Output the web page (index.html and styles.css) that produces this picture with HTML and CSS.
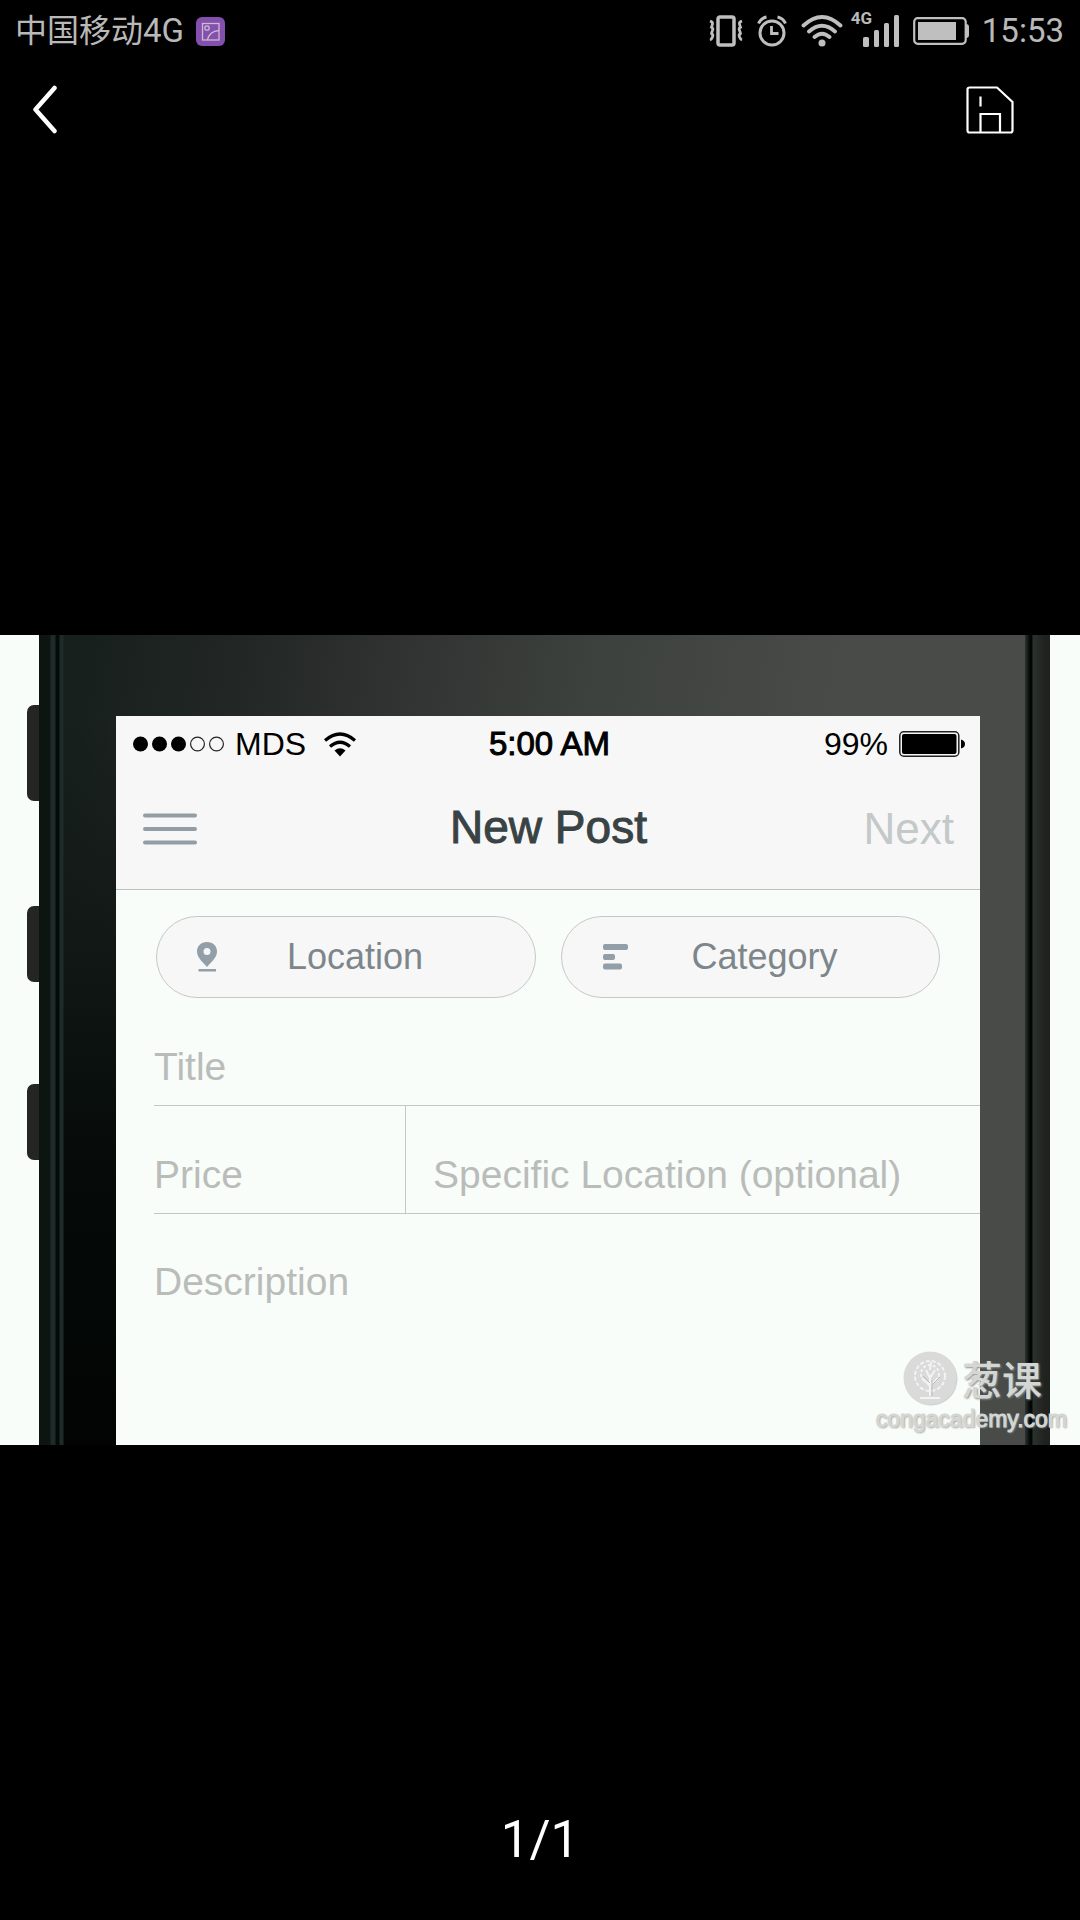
FILE: index.html
```html
<!DOCTYPE html>
<html lang="zh-CN">
<head>
<meta charset="utf-8">
<meta name="viewport" content="width=device-width, initial-scale=1">
<title>1/1</title>
<link rel="stylesheet" href="styles.css">
</head>
<body>
<div class="statusbar">
  <span class="carrier"><span class="carrier-name">中国移动</span>4G</span>
  <svg class="gallery-badge" width="29" height="29" viewBox="0 0 29 29" aria-hidden="true">
    <rect width="29" height="29" rx="6" fill="#8550ad"/>
    <g fill="none" stroke="#c9bcd2" stroke-width="1.3"><rect x="6.5" y="6.5" width="16.5" height="16.5"/><circle cx="11" cy="11" r="2.2"/><path d="M11.5 23c1-5 5-9 11.5-9.5"/></g>
  </svg>
  <div class="indicators">
    <svg width="34" height="32" viewBox="0 0 34 32" fill="none" stroke="#bfbfbf" aria-hidden="true">
      <rect x="9" y="2" width="16" height="28" rx="2" stroke-width="3.5"/>
      <path d="M1 6q3 1 2.500 3t-1 3.200q2 1 1 3.300t-1 3q2 1 1 3.500T1 25M33 6q-3 1-2.500 3t1 3.200q-2 1-1 3.300t1 3q-2 1-1 3.500t2.500 3" stroke-width="2.8"/>
    </svg>
    <svg class="gap-m" width="30" height="32" viewBox="0 0 30 32" fill="none" stroke="#bfbfbf" aria-hidden="true">
      <circle cx="15" cy="18" r="12" stroke-width="3"/><path d="M14.500 11v7.500h7" stroke-width="2.8"/>
      <path d="M1.500 8.500Q4 3 9.500 2M28.500 8.500Q26 3 20.500 2" stroke-width="3"/>
    </svg>
    <svg class="gap-m" width="42" height="32" viewBox="0 0 42 32" fill="none" stroke="#bfbfbf" stroke-width="3.8" stroke-linecap="round" aria-hidden="true">
      <path d="M2.500 10.500Q21-6.500 39.500 10.500M8 16.500Q21 5 34 16.500M13.500 22Q21 15.500 28.500 22"/><circle cx="21" cy="28" r="3.5" fill="#bfbfbf" stroke="none"/>
    </svg>
    <div class="signal">
      <span class="signal-type">4G</span>
      <svg width="36" height="32" viewBox="0 0 36 32" fill="#bfbfbf" aria-hidden="true"><rect y="22" width="6" height="10" rx="1.5"/><rect x="11" y="15" width="5" height="17" rx="1.5"/><rect x="21" y="8" width="5" height="24" rx="1.5"/><rect x="31" width="5" height="32" rx="1.5"/></svg>
    </div>
    <svg class="gap-m" width="57" height="28" viewBox="0 0 57 28" aria-hidden="true">
      <rect x="1.2" y="1.2" width="51.5" height="25.6" rx="3.5" fill="none" stroke="#bfbfbf" stroke-width="2.2"/><rect x="5" y="5" width="38" height="18" fill="#bfbfbf"/><path d="M53 7q3 0 3 3v8q0 3-3 3z" fill="#bfbfbf"/>
    </svg>
    <time class="clock">15:53</time>
  </div>
</div>
<header class="toolbar">
  <button class="tool" type="button" aria-label="返回">
    <svg width="26" height="50" viewBox="0 0 26 50" fill="none" stroke="#fff" stroke-width="4.5" stroke-linecap="round" stroke-linejoin="round"><path d="M22.500 3 3.500 24.500 22.500 46"/></svg>
  </button>
  <button class="tool" type="button" aria-label="保存">
    <svg width="48" height="48" viewBox="0 0 48 48" fill="none" stroke="#fff" stroke-width="2.2"><path d="M3 1.500h28L46.500 16v28.500q0 2-2 2H3.500q-2 0-2-2v-41q0-2 2-2zM14.500 46.500V28h19.500v18.500M14.500 10.500v10"/></svg>
  </button>
</header>
<main class="viewer">
  <div class="photo">
    <div class="phone">
      <i class="side-key side-key-mute"></i><i class="side-key side-key-up"></i><i class="side-key side-key-down"></i>
      <div class="screen">
        <div class="nav">
          <div class="ios-status">
            <div class="ios-left">
              <svg width="91" height="16" viewBox="0 0 91 16" aria-hidden="true"><circle cx="7.5" cy="8" r="7.5"/><circle cx="26.5" cy="8" r="7.5"/><circle cx="45.5" cy="8" r="7.5"/><g fill="none" stroke="#222" stroke-width="1.2"><circle cx="64.5" cy="8" r="6.9"/><circle cx="83.5" cy="8" r="6.9"/></g></svg>
              <span class="ios-carrier">MDS</span>
              <svg class="ios-wifi" width="32" height="25" viewBox="0 0 32 25" fill="none" stroke="#000" stroke-width="3.2" aria-hidden="true"><path d="M1 8.500Q16-4.500 31 8.500M6 14.500Q16 6 26 14.500"/><path d="M10.500 18.500Q16 14 21.500 18.500L16 24.500z" fill="#000" stroke="none"/></svg>
            </div>
            <time class="ios-time">5:00 AM</time>
            <div class="ios-right">
              <span>99%</span>
              <svg width="67" height="26" viewBox="0 0 67 26" aria-hidden="true"><rect x=".8" y=".8" width="59" height="24.4" rx="4" fill="none" stroke="#222" stroke-width="1.5"/><rect x="3" y="3" width="54.5" height="20" rx="2"/><path d="M62 8.500q4 1 4 4.500t-4 4.500z"/></svg>
            </div>
          </div>
          <div class="nav-row">
            <button class="menu" type="button" aria-label="Menu"><svg width="54" height="32" viewBox="0 0 54 32" stroke="#929ea5" stroke-width="4" stroke-linecap="round"><path d="M2 2.500h50M2 16h50M2 29.500h50"/></svg></button>
            <h1 class="title">New Post</h1>
            <button class="next" type="button">Next</button>
          </div>
        </div>
        <form class="post">
          <div class="pills">
            <button class="pill" type="button">
              <svg width="28" height="32" viewBox="0 0 28 32" aria-hidden="true"><path fill="#929ea8" fill-rule="evenodd" d="M11 1C5 1 1 5 1 10.500 1 16 5.500 20 11 26 16.500 20 21 16 21 10.500 21 5 17 1 11 1zm0 6a3.500 3.500 0 1 1 0 7 3.500 3.500 0 0 1 0-7zM2.500 28h17.500v2.500H2.500z"/></svg>
              Location
            </button>
            <button class="pill" type="button">
              <svg width="28" height="32" viewBox="0 0 28 32" fill="#929ea8" aria-hidden="true"><rect x="2" y="3" width="25" height="6" rx="2"/><rect x="2" y="13" width="12" height="6" rx="2"/><rect x="2" y="22.5" width="19" height="6" rx="2"/></svg>
              Category
            </button>
          </div>
          <input class="field" type="text" placeholder="Title" aria-label="Title">
          <div class="split">
            <input class="field" type="text" placeholder="Price" aria-label="Price">
            <input class="field field-place" type="text" placeholder="Specific Location (optional)" aria-label="Specific Location (optional)">
          </div>
          <textarea class="field-long" placeholder="Description" aria-label="Description"></textarea>
        </form>
      </div>
    </div>
    <div class="watermark">
      <div class="brand">
        <svg width="56" height="56" viewBox="0 0 56 56" aria-hidden="true"><circle cx="29" cy="29" r="26.5" fill="#b5b8b5" opacity=".6"/><circle cx="28" cy="28" r="26.5" fill="#d9dad9"/><g fill="none" stroke="#f2f3f2" stroke-width="2"><circle cx="28" cy="26" r="15" stroke-dasharray="4 2"/><circle cx="28" cy="24" r="9" stroke-dasharray="3 2"/><path d="M28 46V25M28 36l-8-8M28 36l8-8M28 28l-4-8M28 28l5-8M28 20l1-8M18 48h20" /></g><path d="M30 46V30M28 33l-7-7M30 35l8-8" fill="none" stroke="#b9bbb9"/></svg>
        <span>葱课</span>
      </div>
      <span class="domain">congacademy.com</span>
    </div>
  </div>
  <p class="counter">1/1</p>
</main>
</body>
</html>
```
FILE: styles.css
```css
* { box-sizing: border-box; }
body {
  margin: 0;
  min-height: 100vh;
  display: flex;
  flex-direction: column;
  background: #000;
  color: #fff;
  font-family: Roboto, "Noto Sans CJK SC", sans-serif;
}
svg { display: block; flex: none; }
button { margin: 0; padding: 0; border: 0; background: none; color: inherit; font: inherit; }
p, h1 { margin: 0; }

/* Device status bar */
.statusbar {
  display: flex;
  align-items: center;
  height: 60px;
  padding: 2px 16px 0 15px;
  color: #b9b9b9;
  font-size: 33px;
  line-height: 40px;
}
.carrier-name { font-size: 32px; }
.gallery-badge { margin-left: 12px; }
.indicators { display: flex; align-items: center; margin-left: auto; }
.gap-m { margin-left: 14px; }
.signal { position: relative; padding-left: 12px; margin-left: 8px; }
.signal-type { position: absolute; left: 0; top: -6px; font-size: 17px; line-height: 18px; font-weight: 700; }
.clock { margin-left: 12px; }

/* Viewer toolbar */
.toolbar {
  display: flex;
  align-items: center;
  justify-content: space-between;
  height: 100px;
  padding: 0 66px 0 32px;
}

/* Photo area with page counter beneath */
.viewer { flex: 1; display: grid; grid-template-rows: 1fr auto 1fr; }
.photo {
  grid-row: 2;
  position: relative;
  padding: 0 30px 0 39px;
  background: #f8fdf9;
}
.counter {
  grid-row: 3;
  align-self: end;
  padding-bottom: 50px;
  text-align: center;
  font-size: 51px;
  line-height: 60px;
}

.phone {
  position: relative;
  padding: 81px 70px 0 77px;
  background:
    linear-gradient(90deg, #0d1512 11px, #1e2b28 12px 16px, #020b09 17px 20px, #1e2c27 21px 24px, transparent 25px) left / 25px 100% no-repeat,
    linear-gradient(90deg, #303431, #010706 5px 7px, #2b322e 8px, #20221f 20px) right / 25px 100% no-repeat,
    linear-gradient(180deg, transparent 10%, #101715 40%, #060b09 65%, #010403) left / 77px 100% no-repeat,
    linear-gradient(100deg, #18201d 5%, #242826 20%, #303331 32%, #3d413e 48%, #484b47 70%);
}
.side-key {
  position: absolute;
  left: -12px;
  width: 12px;
  height: 76px;
  border-radius: 7px 0 0 7px;
  background: #252523;
}
.side-key-mute { top: 70px; height: 96px; }
.side-key-up { top: 271px; }
.side-key-down { top: 449px; }

.screen {
  background: #f8fdf9;
  color: #000;
  font-family: "Liberation Sans", Arial, sans-serif;
}
.nav { padding-bottom: 4px; background: #f7f7f7; border-bottom: 1px solid #bdbfbf; }
.ios-status {
  display: grid;
  grid-template-columns: 1fr auto 1fr;
  align-items: center;
  height: 56px;
  padding: 0 14px 0 17px;
  font-size: 32px;
  line-height: 36px;
}
.ios-left, .ios-right { display: flex; align-items: center; }
.ios-right { justify-content: flex-end; gap: 11px; }
.ios-carrier { margin-left: 11px; }
.ios-wifi { margin-left: 18px; }
.ios-time { font-size: 33px; -webkit-text-stroke: 1px #000; }
.nav-row {
  display: grid;
  grid-template-columns: 1fr auto 1fr;
  align-items: center;
  height: 113px;
  padding: 0 26px 0 27px;
}
.menu { justify-self: start; }
.title { padding-bottom: 4px; color: #394244; font-size: 46px; line-height: 52px; font-weight: 400; -webkit-text-stroke: 1px #394244; }
.next { justify-self: end; color: #c3c8c9; font-size: 44px; line-height: 52px; }

/* New post form */
.post { padding: 26px 0 0 38px; }
.pills { display: grid; grid-template-columns: 1fr 1fr; gap: 25px; padding: 0 40px 0 2px; }
.pill {
  display: flex;
  align-items: center;
  gap: 63px;
  height: 82px;
  padding-left: 39px;
  border: 1px solid #c6c8c8;
  border-radius: 41px;
  background: #f7f7f7;
  color: #7c868b;
  font-size: 36px;
  line-height: 42px;
}
.field, .field-long {
  display: block;
  width: 100%;
  margin: 0;
  border: 0;
  border-radius: 0;
  outline: 0;
  background: none;
  color: #394244;
  font: 39px/44px "Liberation Sans", Arial, sans-serif;
}
.field { height: 108px; padding: 31px 0 0; border-bottom: 1px solid #c4c8c5; }
.split { display: grid; grid-template-columns: 251px 1fr; }
.field-place { padding-left: 27px; border-left: 1px solid #c4c8c5; }
.field-long { height: 231px; padding: 46px 0 0; resize: none; }
.field::placeholder, .field-long::placeholder { color: #babcba; opacity: 1; }

.watermark {
  position: absolute;
  right: 13px;
  bottom: 13px;
  display: flex;
  flex-direction: column;
  align-items: flex-end;
  color: #d4d6d4;
  text-shadow: 1px 1px 2px #8d908d;
}
.brand { display: flex; align-items: center; gap: 4px; padding-right: 25px; font: 500 40px/52px "Noto Sans CJK SC", sans-serif; }
.domain { font: 23px/26px "Liberation Sans", Arial, sans-serif; -webkit-text-stroke: 1px #d4d6d4; }
```
